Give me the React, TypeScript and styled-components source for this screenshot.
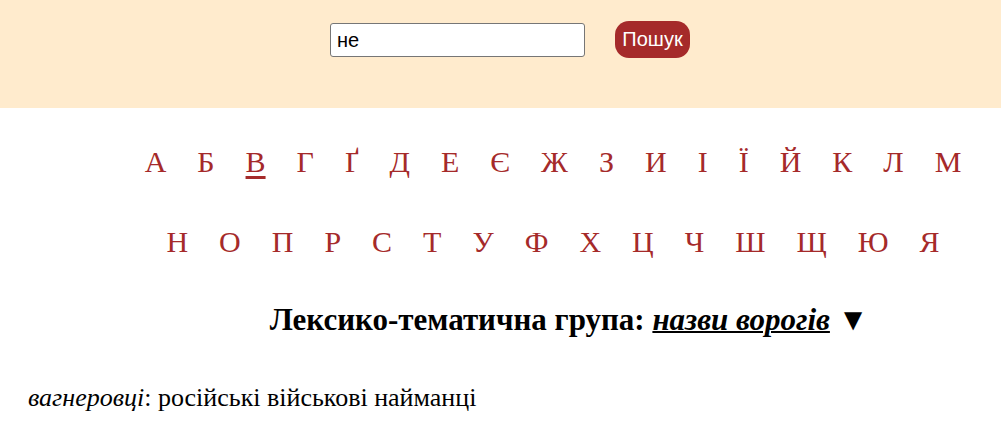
import React from "react";
import styled, { createGlobalStyle } from "styled-components";

const Global = createGlobalStyle`
  html, body { margin: 0; padding: 0; background: #ffffff; }
  body { font-family: "Liberation Serif", "Times New Roman", serif; }
`;

const Header = styled.header`
  background: #ffebcd;
  height: 108px;
  display: flex;
  justify-content: center;
  align-items: flex-start;
  gap: 30px;
  padding: 21px 0 0 19px;
  box-sizing: border-box;
`;

const SearchInput = styled.input`
  width: 255px;
  height: 34px;
  box-sizing: border-box;
  margin-top: 2px;
  border: 1px solid #767676;
  border-radius: 3px;
  background: #fff;
  padding: 0 6px;
  font-family: "Liberation Sans", Arial, sans-serif;
  font-size: 20px;
  color: #000;
  outline: none;
`;

const SearchButton = styled.button`
  height: 37px;
  width: 75px;
  border: none;
  border-radius: 14px;
  background: #a52a2a;
  color: #fff;
  font-family: "Liberation Sans", Arial, sans-serif;
  font-size: 20px;
  padding: 0;
  cursor: pointer;
`;

const Alphabet = styled.nav`
  padding: 14px 0 0 105px;
`;

const LetterRow = styled.div`
  display: flex;
  justify-content: center;
`;

const Letter = styled.a<{ $active?: boolean }>`
  font-family: "Liberation Serif", "Times New Roman", serif;
  font-size: 30px;
  line-height: 34px;
  padding: 23px 15.5px;
  color: #a52a2a;
  text-decoration: ${(p) => (p.$active ? "underline" : "none")};
  text-decoration-thickness: 3px;
  text-underline-offset: 4px;
  cursor: pointer;
`;

const GroupTitle = styled.h2`
  margin: 20px 0 0;
  padding: 0 0 0 137px;
  text-align: center;
  font-family: "Liberation Serif", "Times New Roman", serif;
  font-size: 31px;
  font-weight: bold;
  line-height: 36px;
  color: #000;
`;

const GroupLink = styled.a`
  font-style: italic;
  color: #000;
  text-decoration: underline;
  text-decoration-thickness: 2px;
`;

const Entry = styled.p`
  margin: 45px 0 0 28px;
  font-family: "Liberation Serif", "Times New Roman", serif;
  font-size: 26px;
  line-height: 30px;
  color: #000;
`;

const Word = styled.i`
  font-style: italic;
`;

const rows = [
  "АБВГҐДЕЄЖЗИІЇЙКЛМ".split(""),
  "НОПРСТУФХЦЧШЩЮЯ".split(""),
];

export default function App() {
  return (
    <>
      <Global />
      <Header>
        <SearchInput defaultValue="не" />
        <SearchButton>Пошук</SearchButton>
      </Header>
      <Alphabet>
        {rows.map((r, i) => (
          <LetterRow key={i}>
            {r.map((l) => (
              <Letter key={l} $active={l === "В"}>
                {l}
              </Letter>
            ))}
          </LetterRow>
        ))}
      </Alphabet>
      <GroupTitle>
        Лексико-тематична група: <GroupLink>назви ворогів</GroupLink> ▼
      </GroupTitle>
      <Entry>
        <Word>вагнеровці</Word>: російські військові найманці
      </Entry>
    </>
  );
}
